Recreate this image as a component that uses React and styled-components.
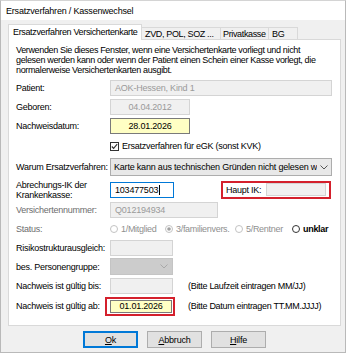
import React from "react";
import styled, { createGlobalStyle } from "styled-components";

const Global = createGlobalStyle`
  html, body { margin: 0; padding: 0; background: #ffffff; }
  body { font-family: "Liberation Sans", Arial, sans-serif; font-size: 9px; color: #000; }
  * { box-sizing: border-box; }
`;

const Window = styled.div`
  width: 346px;
  height: 353px;
  background: #f0f0f0;
  border: 1px solid #b9b9b9;
  border-top-color: #d4d4d4;
  display: flex;
  flex-direction: column;
`;

const TitleBar = styled.div`
  height: 19px;
  background: #ffffff;
  display: flex;
  align-items: center;
  padding-left: 5px;
  font-size: 9px;
  letter-spacing: -0.2px;
  color: #000;
`;

const Body = styled.div`
  padding: 5px 4px 0 7px;
  display: flex;
  flex-direction: column;
`;

const TabStrip = styled.div`
  display: flex;
  align-items: flex-end;
  height: 15px;
  position: relative;
  z-index: 1;
  margin-bottom: -1px;
`;

const Tab = styled.div`
  width: ${(p) => p.$w}px;
  height: ${(p) => (p.$active ? 16 : 13)}px;
  background: ${(p) => (p.$active ? "#ffffff" : "#f0f0f0")};
  border: 1px solid #d9d9d9;
  border-bottom: ${(p) => (p.$active ? "none" : "1px solid #d9d9d9")};
  border-left: ${(p) => (p.$first ? "1px solid #d9d9d9" : "none")};
  display: flex;
  align-items: center;
  padding-left: ${(p) => p.$pl}px;
  padding-bottom: ${(p) => (p.$active ? 1 : 0)}px;
  white-space: nowrap;
  overflow: hidden;
  font-size: 9px;
  letter-spacing: -0.35px;
`;

const Panel = styled.div`
  width: 333px;
  height: 287px;
  background: #ffffff;
  border: 1px solid #d9d9d9;
  padding: 5px 7px 0 7px;
  display: flex;
  flex-direction: column;
`;

const Description = styled.div`
  line-height: 10px;
  font-size: 9px;
  letter-spacing: -0.35px;
  margin-bottom: 3px;
`;

const Row = styled.div`
  display: flex;
  align-items: center;
  height: ${(p) => p.$h}px;
`;

const Label = styled.div`
  width: 94px;
  flex: none;
  font-size: 9px;
  letter-spacing: -0.25px;
  line-height: 10px;
  color: ${(p) => (p.$dim ? "#6d6d6d" : "#000")};
`;

const Field = styled.div`
  width: ${(p) => p.$w}px;
  height: ${(p) => p.$h || 16}px;
  flex: none;
  display: flex;
  align-items: center;
  justify-content: ${(p) => (p.$center ? "center" : "flex-start")};
  padding: 0 4px;
  font-size: 9px;
  letter-spacing: -0.2px;
  white-space: nowrap;
  overflow: hidden;
  background: ${(p) =>
    p.$kind === "yellow" ? "#ffffc4" : p.$kind === "white" ? "#ffffff" : p.$kind === "dark" ? "#cccccc" : "#f0f0f0"};
  border: 1px solid
    ${(p) =>
      p.$kind === "yellow" ? "#7a7a7a" : p.$kind === "white" ? "#0078d7" : p.$kind === "dark" ? "#cccccc" : "#d4d4d4"};
  color: ${(p) => (p.$kind === "disabled" || p.$kind === "dark" ? "#9a9a9a" : "#000")};
`;

const Caret = styled.span`
  display: inline-block;
  width: 1px;
  height: 10px;
  background: #000;
  margin-left: 1px;
`;

const Select = styled.div`
  width: 222px;
  height: 18px;
  flex: none;
  display: flex;
  align-items: center;
  justify-content: space-between;
  padding: 0 3px 0 3px;
  background: #e8e8e8;
  border: 1px solid #adadad;
  font-size: 9px;
  letter-spacing: -0.2px;
  white-space: nowrap;
  overflow: hidden;
`;

const SelectText = styled.span`
  overflow: hidden;
  flex: 1;
`;

const Chevron = ({ color = "#555" }) => (
  <svg width="8" height="5" viewBox="0 0 8 5" style={{ flex: "none", marginLeft: 3 }}>
    <path d="M0.5 0.5 L4 4 L7.5 0.5" fill="none" stroke={color} strokeWidth="1" />
  </svg>
);

const DarkSelect = styled.div`
  width: 63px;
  height: 17px;
  flex: none;
  display: flex;
  align-items: center;
  justify-content: flex-end;
  padding-right: 4px;
  background: #cccccc;
  border: 1px solid #c4c4c4;
`;

const CheckRow = styled.div`
  display: flex;
  align-items: center;
  gap: 3px;
  font-size: 9px;
  letter-spacing: -0.25px;
`;

const CheckBox = () => (
  <svg width="9" height="9" viewBox="0 0 9 9" style={{ flex: "none" }}>
    <rect x="0.5" y="0.5" width="8" height="8" fill="#fff" stroke="#333" />
    <path d="M1.8 4.5 L3.6 6.4 L7.2 2.2" fill="none" stroke="#333" strokeWidth="1.1" />
  </svg>
);

const RedBox = styled.div`
  border: 2px solid #d4202c;
  display: flex;
  align-items: center;
  flex: none;
  width: ${(p) => p.$w}px;
  height: ${(p) => p.$h}px;
  margin-left: ${(p) => p.$ml || 0}px;
  padding: 0 ${(p) => p.$pr || 1}px 0 ${(p) => p.$pl || 1}px;
  gap: ${(p) => p.$gap || 0}px;
`;

const InlineLabel = styled.span`
  font-size: 9px;
  letter-spacing: -0.25px;
  flex: none;
`;

const Hint = styled.span`
  margin-left: ${(p) => p.$ml}px;
  font-size: 9px;
  letter-spacing: -0.3px;
  white-space: nowrap;
`;

const RadioGroup = styled.div`
  display: flex;
  align-items: center;
`;

const RadioItem = styled.div`
  display: flex;
  align-items: center;
  gap: 3px;
  width: ${(p) => p.$w}px;
  flex: none;
  font-size: 9px;
  letter-spacing: -0.3px;
  color: ${(p) => (p.$enabled ? "#000" : "#8f8f8f")};
  font-weight: ${(p) => (p.$enabled ? 600 : 400)};
`;

const Radio = ({ checked, enabled }) => (
  <svg width="8" height="8" viewBox="0 0 8 8" style={{ flex: "none" }}>
    <circle cx="4" cy="4" r="3.5" fill="#fff" stroke={enabled ? "#333" : "#c2c2c2"} />
    {checked && <circle cx="4" cy="4" r="1.8" fill="#a0a0a0" />}
  </svg>
);

const ButtonRow = styled.div`
  display: flex;
  gap: 9px;
  padding-left: 75px;
  margin-top: 5px;
`;

const Button = styled.div`
  width: 55px;
  height: 17px;
  display: flex;
  align-items: center;
  justify-content: center;
  background: #e1e1e1;
  border: 1px solid ${(p) => (p.$default ? "#0078d7" : "#adadad")};
  box-shadow: ${(p) => (p.$default ? "inset 0 0 0 1px #0078d7" : "none")};
  font-size: 9px;
  letter-spacing: -0.2px;
  u { text-decoration: underline; }
`;

export default function App() {
  return (
    <>
      <Global />
      <Window>
        <TitleBar>Ersatzverfahren / Kassenwechsel</TitleBar>
        <Body>
          <TabStrip>
            <Tab $active $first $w={134} $pl={4}>Ersatzverfahren Versichertenkarte</Tab>
            <Tab $w={79} $pl={3}>ZVD, POL, SOZ ...</Tab>
            <Tab $w={48} $pl={2}>Privatkasse</Tab>
            <Tab $w={29} $pl={3}>BG</Tab>
          </TabStrip>
          <Panel>
            <Description>
              Verwenden Sie dieses Fenster, wenn eine Versichertenkarte vorliegt und nicht
              <br />
              gelesen werden kann oder wenn der Patient einen Schein einer Kasse vorlegt, die
              <br />
              normalerweise Versichertenkarten ausgibt.
            </Description>

            <Row $h={19}>
              <Label>Patient:</Label>
              <Field $w={222} $kind="disabled">AOK-Hessen, Kind 1</Field>
            </Row>
            <Row $h={19}>
              <Label>Geboren:</Label>
              <Field $w={80} $kind="disabled" $center>04.04.2012</Field>
            </Row>
            <Row $h={20}>
              <Label>Nachweisdatum:</Label>
              <Field $w={80} $kind="yellow" $center>28.01.2026</Field>
            </Row>
            <Row $h={20}>
              <Label />
              <CheckRow>
                <CheckBox />
                Ersatzverfahren für eGK (sonst KVK)
              </CheckRow>
            </Row>
            <Row $h={22}>
              <Label>Warum Ersatzverfahren:</Label>
              <Select>
                <SelectText>Karte kann aus technischen Gründen nicht gelesen werden</SelectText>
                <Chevron />
              </Select>
            </Row>
            <Row $h={23}>
              <Label>
                Abrechungs-IK der
                <br />
                Krankenkasse:
              </Label>
              <Field $w={64} $kind="white">
                103477503
                <Caret />
              </Field>
              <RedBox $w={110} $h={18} $ml={47} $pl={3} $pr={1} $gap={5}>
                <InlineLabel>Haupt IK:</InlineLabel>
                <Field $w={60} $h={13} $kind="disabled" />
              </RedBox>
            </Row>
            <Row $h={18}>
              <Label $dim>Versichertennummer:</Label>
              <Field $w={108} $kind="disabled">Q012194934</Field>
            </Row>
            <Row $h={19}>
              <Label $dim>Status:</Label>
              <RadioGroup>
                <RadioItem $w={55}>
                  <Radio />
                  1/Mitglied
                </RadioItem>
                <RadioItem $w={70}>
                  <Radio checked />
                  3/familienvers.
                </RadioItem>
                <RadioItem $w={57}>
                  <Radio />
                  5/Rentner
                </RadioItem>
                <RadioItem $w={40} $enabled>
                  <Radio enabled />
                  unklar
                </RadioItem>
              </RadioGroup>
            </Row>
            <Row $h={19}>
              <Label>Risikostrukturausgleich:</Label>
              <Field $w={63} $kind="disabled" />
            </Row>
            <Row $h={19}>
              <Label>bes. Personengruppe:</Label>
              <DarkSelect>
                <Chevron color="#a8a8a8" />
              </DarkSelect>
            </Row>
            <Row $h={20}>
              <Label>Nachweis ist gültig bis:</Label>
              <Field $w={63} $kind="disabled" />
              <Hint $ml={15}>(Bitte Laufzeit eintragen MM/JJ)</Hint>
            </Row>
            <Row $h={20}>
              <Label>Nachweis ist gültig ab:</Label>
              <RedBox $w={70} $h={19} $ml={-5} $pl={3} $pr={3}>
                <Field $w={62} $h={13} $kind="yellow" $center>01.01.2026</Field>
              </RedBox>
              <Hint $ml={13}>(Bitte Datum eintragen TT.MM.JJJJ)</Hint>
            </Row>
          </Panel>
          <ButtonRow>
            <Button $default>
              <span><u>O</u>k</span>
            </Button>
            <Button>
              <span><u>A</u>bbruch</span>
            </Button>
            <Button>
              <span><u>H</u>ilfe</span>
            </Button>
          </ButtonRow>
        </Body>
      </Window>
    </>
  );
}
